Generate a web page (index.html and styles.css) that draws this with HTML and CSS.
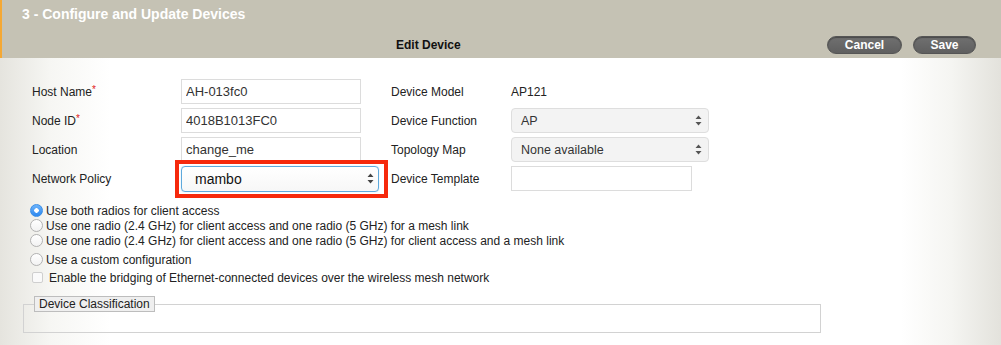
FILE: index.html
```html
<!DOCTYPE html>
<html>
	<head>
		<meta charset="UTF-8"/>
		<title>Configure and Update Devices</title>
		<link rel="stylesheet" href="styles.css">
	</head>
	<body>
		<div class="wizard_head">
			<div class="step_title">3 - Configure and Update Devices</div>
			<div class="toolbar">
				<span class="toolbar_title">Edit Device</span>
				<span class="actions">
					<button class="pill cancel">Cancel</button>
					<button class="pill save">Save</button>
				</span>
			</div>
		</div>

		<div class="panel">
			<div class="form_grid">
				<label class="lbl">Host Name<sup class="req">*</sup></label>
				<input class="field" type="text" value="AH-013fc0">
				<span></span>
				<label class="lbl">Device Model</label>
				<span class="value">AP121</span>

				<label class="lbl">Node ID<sup class="req">*</sup></label>
				<input class="field" type="text" value="4018B1013FC0">
				<span></span>
				<label class="lbl">Device Function</label>
				<div class="select">
					<span>AP</span>
					<svg class="arrows" width="7" height="11" viewBox="0 0 7 11"><path d="M3.5 0.5 L6.5 4 L0.5 4 Z M3.5 10.5 L6.5 7 L0.5 7 Z" fill="#555"/></svg>
				</div>

				<label class="lbl">Location</label>
				<input class="field" type="text" value="change_me">
				<span></span>
				<label class="lbl">Topology Map</label>
				<div class="select">
					<span>None available</span>
					<svg class="arrows" width="7" height="11" viewBox="0 0 7 11"><path d="M3.5 0.5 L6.5 4 L0.5 4 Z M3.5 10.5 L6.5 7 L0.5 7 Z" fill="#555"/></svg>
				</div>

				<label class="lbl">Network Policy</label>
				<div class="highlight">
					<div class="select policy">
						<span>mambo</span>
						<svg class="arrows" width="7" height="11" viewBox="0 0 7 11"><path d="M3.5 0.5 L6.5 4 L0.5 4 Z M3.5 10.5 L6.5 7 L0.5 7 Z" fill="#444"/></svg>
					</div>
				</div>
				<span></span>
				<label class="lbl">Device Template</label>
				<input class="field template" type="text" value="">
			</div>

			<div class="options">
				<div class="opt"><span class="radio on"></span>Use both radios for client access</div>
				<div class="opt"><span class="radio"></span>Use one radio (2.4 GHz) for client access and one radio (5 GHz) for a mesh link</div>
				<div class="opt"><span class="radio"></span>Use one radio (2.4 GHz) for client access and one radio (5 GHz) for client access and a mesh link</div>
				<div class="opt custom"><span class="radio"></span>Use a custom configuration</div>
				<div class="opt bridge"><span class="check"></span>Enable the bridging of Ethernet-connected devices over the wireless mesh network</div>
			</div>

			<fieldset class="classification">
				<legend>Device Classification</legend>
			</fieldset>
		</div>
	</body>
</html>
```

FILE: styles.css
```css
html, body{
	margin: 0;
	height: 100%;
}
body{
	font-family: "Liberation Sans", Arial, Helvetica, sans-serif;
	font-size: 12px;
	color: #222;
	background: #fff;
}
div.wizard_head{
	height: 58px;
	box-sizing: border-box;
	background-color: #c5c2b4;
	border-left: 2px solid #f5a833;
}
div.step_title{
	padding: 6px 0 0 20px;
	font-size: 14px;
	line-height: 17px;
	font-weight: bold;
	color: #fff;
}
div.toolbar{
	display: flex;
	align-items: center;
	padding-top: 13px;
}
span.toolbar_title{
	margin-left: 394px;
	font-weight: bold;
	font-size: 12px;
	color: #111;
}
span.actions{
	margin-left: auto;
	margin-right: 25px;
	display: flex;
	gap: 11px;
}
button.pill{
	height: 18px;
	padding: 0;
	border: 1px solid #555;
	border-radius: 9px;
	background: linear-gradient(#707070, #5f5f5f);
	color: #fff;
	font-family: "Liberation Sans", Arial, sans-serif;
	font-weight: bold;
	font-size: 12px;
	line-height: 16px;
	box-shadow: inset 0 1px 1px rgba(0,0,0,0.35);
}
button.cancel{ width: 75px; }
button.save{ width: 63px; }

div.panel{
	height: calc(100% - 58px);
	box-sizing: border-box;
	padding-top: 21px;
	background: linear-gradient(to right, #e5e4de 0, #f6f6f3 50px, #fff 110px, #fff calc(100% - 100px), #f5f5f2 calc(100% - 50px), #e3e2dc 100%);
}
div.form_grid{
	margin-left: 32px;
	display: grid;
	grid-template-columns: 149px 180px 30px 120px 198px;
	grid-auto-rows: 25px;
	row-gap: 4px;
	align-items: center;
}
label.lbl{
	color: #222;
}
sup.req{
	color: #e02020;
	font-size: 10px;
	vertical-align: 3px;
	line-height: 0;
}
span.value{
	color: #222;
}
input.field{
	height: 25px;
	width: 180px;
	box-sizing: border-box;
	margin: 0;
	padding: 0 0 0 4px;
	border: 1px solid #dcdcdc;
	background: #fff;
	font-family: "Liberation Sans", Arial, sans-serif;
	font-size: 13px;
	color: #333;
	outline: none;
}
input.template{
	width: 181px;
}
div.select{
	height: 25px;
	box-sizing: border-box;
	display: flex;
	align-items: center;
	justify-content: space-between;
	padding: 0 6px 0 9px;
	border: 1px solid #dedede;
	border-radius: 4px;
	background: #f3f3f3;
	font-size: 12.5px;
	color: #333;
}
div.highlight{
	position: relative;
	width: 198px;
	height: 26px;
}
div.highlight::after{
	content: "";
	position: absolute;
	left: -6px;
	top: -6px;
	right: -9px;
	bottom: -6px;
	border: 4px solid #f6290c;
}
div.policy{
	height: 26px;
	border: 1px solid #5ea9dc;
	background: linear-gradient(#fff, #f7f7f7);
	padding: 0 4px 0 13px;
	font-size: 14px;
	color: #111;
	box-shadow: 0 0 1px rgba(80,160,220,0.6);
}
div.options{
	margin-top: 12px;
}
div.opt{
	display: flex;
	align-items: center;
	height: 15px;
	padding-left: 30px;
	color: #222;
	font-size: 12px;
	white-space: nowrap;
}
div.custom{
	margin-top: 4px;
	height: 15px;
}
div.bridge{
	margin-top: 2px;
	height: 17px;
	padding-left: 32px;
}
span.radio{
	width: 13px;
	height: 13px;
	box-sizing: border-box;
	margin-right: 3px;
	border: 1px solid #b2b2b2;
	border-radius: 50%;
	background: linear-gradient(#fff, #f2f2f2);
	flex: none;
}
span.radio.on{
	border-color: #3a8ee6;
	background: radial-gradient(circle, #fff 0, #fff 2px, transparent 2.5px), linear-gradient(#6cb3fa, #2d88f0);
}
span.check{
	width: 11px;
	height: 11px;
	box-sizing: border-box;
	margin-right: 6px;
	border: 1px solid #cfcfcf;
	border-radius: 2px;
	background: #fafafa;
	flex: none;
}
fieldset.classification{
	margin: 10px 0 0 23px;
	width: 798px;
	box-sizing: border-box;
	height: 37px;
	padding: 0 10px;
	border: 1px solid #d2d2d2;
}
fieldset.classification legend{
	padding: 0 4px;
	height: 16px;
	box-sizing: border-box;
	line-height: 14px;
	border: 1px solid #bdbdbd;
	background: #efefef;
	font-size: 12px;
	color: #222;
}
```
